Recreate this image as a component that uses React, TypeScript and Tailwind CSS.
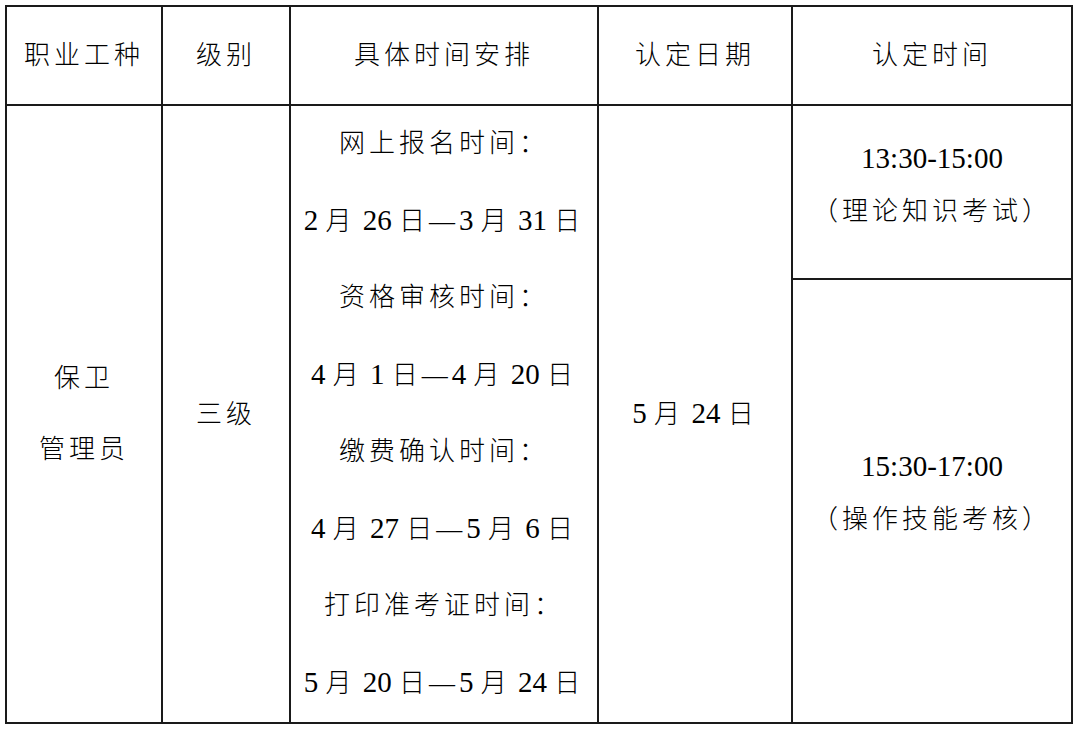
const font = "font-['Liberation_Serif','Noto_Sans_CJK_SC',serif]";
const cell = "border-2 border-[#1a1a1a] p-0 text-center align-middle";

// ascii runs (digits, spaces) are set a bit larger and without tracking, like the Times text in the source doc
function Mixed({ text }: { text: string }) {
  const parts = text.split(/([\x20-\x7E]+)/).filter((p) => p !== "");
  return (
    <>
      {parts.map((p, i) =>
        /^[\x20-\x7E]+$/.test(p) ? (
          <span key={i} className="text-[29px] tracking-normal">
            {p}
          </span>
        ) : (
          <span key={i}>{p}</span>
        )
      )}
    </>
  );
}

const schedule = [
  "网上报名时间：",
  "2 月 26 日—3 月 31 日",
  "资格审核时间：",
  "4 月 1 日—4 月 20 日",
  "缴费确认时间：",
  "4 月 27 日—5 月 6 日",
  "打印准考证时间：",
  "5 月 20 日—5 月 24 日",
];

export default function App() {
  return (
    <div className={`w-[1080px] h-[731px] bg-white text-black ${font} text-[26px] tracking-[4px] font-light`}>
      <table className="border-collapse table-fixed w-[1066px] ml-[5px] mt-[5px]">
        <colgroup>
          <col className="w-[156px]" />
          <col className="w-[128px]" />
          <col className="w-[308px]" />
          <col className="w-[194px]" />
          <col className="w-[280px]" />
        </colgroup>
        <thead>
          <tr className="h-[99px]">
            <th className={`${cell} font-light`}>职业工种</th>
            <th className={`${cell} font-light`}>级别</th>
            <th className={`${cell} font-light`}>具体时间安排</th>
            <th className={`${cell} font-light`}>认定日期</th>
            <th className={`${cell} font-light`}>认定时间</th>
          </tr>
        </thead>
        <tbody>
          <tr className="h-[174px]">
            <td rowSpan={2} className={cell}>
              <div className="leading-[71px]">保卫</div>
              <div className="leading-[71px]">管理员</div>
            </td>
            <td rowSpan={2} className={cell}>
              三级
            </td>
            <td rowSpan={2} className={cell}>
              {schedule.map((line) => (
                <div key={line} className="leading-[76px] whitespace-nowrap">
                  <Mixed text={line} />
                </div>
              ))}
            </td>
            <td rowSpan={2} className={`${cell} whitespace-nowrap`}>
              <Mixed text="5 月 24 日" />
            </td>
            <td className={`${cell} pb-[14px]`}>
              <div className="leading-[54px] text-[29px] tracking-normal">13:30-15:00</div>
              <div className="leading-[54px]">（理论知识考试）</div>
            </td>
          </tr>
          <tr className="h-[444px]">
            <td className={`${cell} pb-[16px]`}>
              <div className="leading-[54px] text-[29px] tracking-normal">15:30-17:00</div>
              <div className="leading-[54px]">（操作技能考核）</div>
            </td>
          </tr>
        </tbody>
      </table>
    </div>
  );
}
